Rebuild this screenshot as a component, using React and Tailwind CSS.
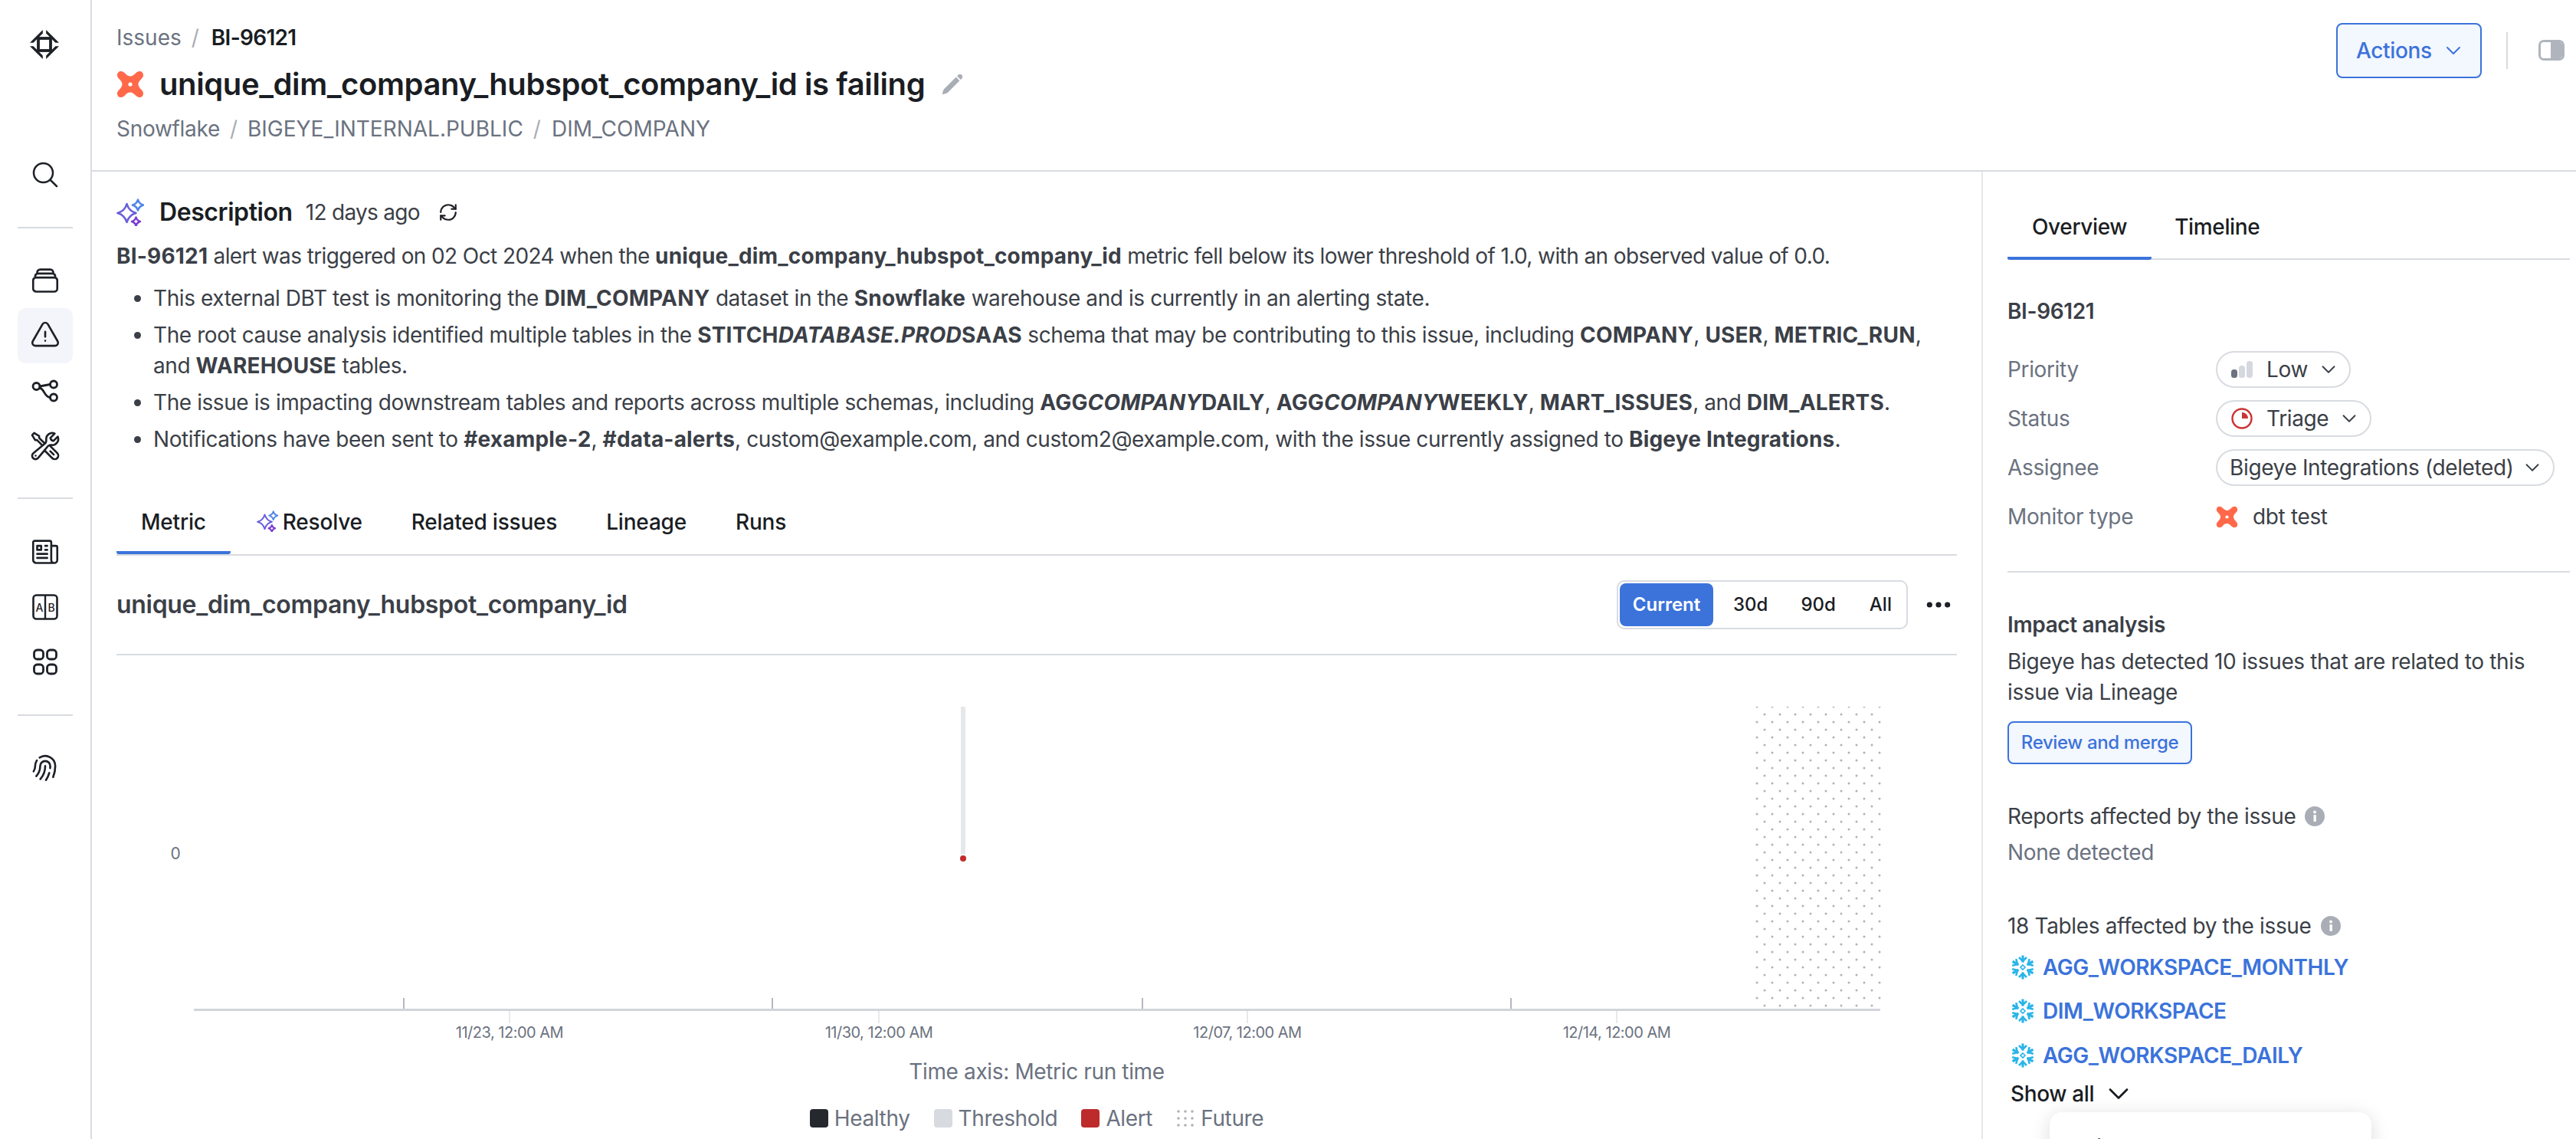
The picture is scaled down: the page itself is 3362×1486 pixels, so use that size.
import React from "react";
import { ChevronDown, Ellipsis, RefreshCw } from "lucide-react";
import {
  HiOutlineMagnifyingGlass,
  HiOutlineRectangleStack,
  HiOutlineExclamationTriangle,
  HiOutlineWrenchScrewdriver,
  HiOutlineNewspaper,
  HiOutlineFingerPrint,
  HiPencil,
} from "react-icons/hi2";

const Logo = () => (
  <svg width="40" height="40" viewBox="0 0 40 40" fill="#1d2026" className="mt-[4px] -ml-[2px]">
    <polygon points="17.8,1 17.8,5.6 5.6,17.8 1,17.8" />
    <polygon points="22.2,1 22.2,5.6 34.4,17.8 39,17.8" />
    <polygon points="17.8,39 17.8,34.4 5.6,22.2 1,22.2" />
    <polygon points="22.2,39 22.2,34.4 34.4,22.2 39,22.2" />
    <rect x="12" y="12" width="16" height="16" fill="none" stroke="#1d2026" strokeWidth="3.8" />
  </svg>
);

const Lineage = () => (
  <svg width="36" height="32" viewBox="0 0 36 32" fill="none" stroke="#1d2026" strokeWidth="2.8" strokeLinecap="round">
    <circle cx="6.5" cy="10" r="4.5" />
    <circle cx="29" cy="7.5" r="4.5" />
    <circle cx="29" cy="24.5" r="4.5" />
    <path d="M11 10 L24.5 7.5" />
    <path d="M10.5 12 C17 13 17 24.5 24.5 24.5" />
  </svg>
);

const AB = () => (
  <svg width="34" height="34" viewBox="0 0 34 34" fill="none">
    <rect x="1.5" y="1.5" width="31" height="31" rx="4" stroke="#1d2026" strokeWidth="2.6" />
    <path d="M17 1.5 V32.5" stroke="#1d2026" strokeWidth="2.4" />
    <text x="9.3" y="22.5" fontSize="14" fontWeight="500" textAnchor="middle" fill="#1d2026" fontFamily="Inter, sans-serif">A</text>
    <text x="25" y="22.5" fontSize="14" fontWeight="500" textAnchor="middle" fill="#1d2026" fontFamily="Inter, sans-serif">B</text>
  </svg>
);

const Grid = () => (
  <svg width="32" height="36" viewBox="0 0 32 36" fill="none" stroke="#1d2026" strokeWidth="2.8">
    <rect x="1.5" y="2" width="12" height="12" rx="4" />
    <rect x="18.5" y="2" width="12" height="12" rx="4" />
    <rect x="1.5" y="21" width="12" height="12" rx="4" />
    <rect x="18.5" y="21" width="12" height="12" rx="4" />
  </svg>
);

const DBT_PATH =
  "M6 1 C8 1 9.5 2 11 3.5 C13.5 6 15.5 7.5 18 7.5 C20.5 7.5 23 5.5 25 3.5 C26.5 2 28 1 30 1 C33 1 35 3 35 6 C35 8 34 9.5 32.5 11 C30 13.5 28.5 15.5 28.5 18 C28.5 20.5 30.5 23 32.5 25 C34 26.5 35 28 35 30 C35 33 33 35 30 35 C28 35 26.5 34 25 32.5 C23 30.5 20.5 28.5 18 28.5 C15.5 28.5 13 30 11 32.5 C9.5 34 8 35 6 35 C3 35 1 33 1 30 C1 28 2 26.5 3.5 25 C5.5 23 7.5 20.5 7.5 18 C7.5 15.5 6 13.5 3.5 11 C2 9.5 1 8 1 6 C1 3 3 1 6 1Z";

const Dbt = ({ size = 36 }) => (
  <svg width={size} height={size} viewBox="0 0 36 36" className="shrink-0">
    <path d={DBT_PATH} fill="#ff694a" />
    <circle cx="18" cy="18" r="2.6" fill="#fff" />
  </svg>
);

const star = (cx, cy, r) => {
  const k = r * 0.22;
  return `M${cx} ${cy - r} Q${cx + k} ${cy - k} ${cx + r} ${cy} Q${cx + k} ${cy + k} ${cx} ${cy + r} Q${cx - k} ${cy + k} ${cx - r} ${cy} Q${cx - k} ${cy - k} ${cx} ${cy - r}Z`;
};

const Sparkle = ({ size = 36 }) => (
  <svg width={size} height={size} viewBox="0 0 36 36" fill="none" strokeWidth="2.6" strokeLinejoin="round" className="shrink-0">
    <path d={star(13.5, 19, 12)} stroke="#6a5fdc" />
    <path d={star(28, 8.5, 7)} stroke="#4f86e8" />
    <path d={star(25.5, 30, 5.5)} stroke="#7a3ed0" />
  </svg>
);

const Snow = () => (
  <svg width="32" height="32" viewBox="-16 -16 32 32" fill="none" stroke="#29b5e8" strokeWidth="3.2" className="shrink-0">
    {[0, 60, 120, 180, 240, 300].map((a) => (
      <g key={a} transform={`rotate(${a})`}>
        <path d="M0 -6.5 V-15.5" />
        <path d="M-5 -13 L0 -8 L5 -13" strokeWidth="2.6" />
      </g>
    ))}
    <path d="M0 -3 L3 0 L0 3 L-3 0Z" strokeWidth="1.6" />
  </svg>
);

const Info = () => (
  <svg width="26" height="26" viewBox="0 0 26 26" className="shrink-0">
    <circle cx="13" cy="13" r="13" fill="#a9adb6" />
    <rect x="11.5" y="11" width="3.4" height="9" rx="1.2" fill="#fff" />
    <circle cx="13" cy="7.5" r="2" fill="#fff" />
  </svg>
);

const Bars = () => (
  <svg width="28" height="22" viewBox="0 0 28 22" className="shrink-0">
    <rect x="0" y="11" width="8" height="11" rx="3.5" fill="#6b7280" />
    <rect x="10" y="6" width="8" height="16" rx="3.5" fill="#d5d8de" />
    <rect x="20" y="0" width="8" height="22" rx="3.5" fill="#d5d8de" />
  </svg>
);

const Triage = () => (
  <svg width="28" height="28" viewBox="0 0 28 28" fill="none" className="shrink-0">
    <circle cx="14" cy="14" r="12.5" stroke="#cc3333" strokeWidth="2.4" />
    <path d="M14 6 A8 8 0 0 1 22 14 H14Z" fill="#cc3333" />
  </svg>
);

const SideCell = ({ active, children }) => (
  <div className={`w-[72px] h-[72px] flex items-center justify-center rounded-[10px] ${active ? "bg-[#f4f5fa]" : ""}`}>
    {children}
  </div>
);

const Divider = ({ className }) => <div className={`w-[72px] h-[2px] bg-[#d8dbe0] ${className}`} />;

const Sidebar = () => (
  <aside className="w-[120px] shrink-0 border-r-2 border-[#d8dbe0] flex flex-col items-center pt-5 text-[#1d2026]">
    <SideCell><Logo /></SideCell>
    <div className="mt-[100px]"><SideCell><HiOutlineMagnifyingGlass size={40} /></SideCell></div>
    <Divider className="mt-8" />
    <div className="mt-8">
      <SideCell><HiOutlineRectangleStack size={42} /></SideCell>
      <SideCell active><HiOutlineExclamationTriangle size={42} /></SideCell>
      <SideCell><Lineage /></SideCell>
      <SideCell><HiOutlineWrenchScrewdriver size={42} /></SideCell>
    </div>
    <Divider className="mt-[31px]" />
    <div className="mt-[33px]">
      <SideCell><HiOutlineNewspaper size={42} /></SideCell>
      <SideCell><AB /></SideCell>
      <SideCell><Grid /></SideCell>
    </div>
    <Divider className="mt-8" />
    <div className="mt-8"><SideCell><HiOutlineFingerPrint size={42} /></SideCell></div>
  </aside>
);

const Slash = ({ className = "mx-[13px]" }) => <span className={`text-[#a9adb6] ${className}`}>/</span>;

const Header = () => (
  <header className="h-[224px] shrink-0 border-b-2 border-[#d8dbe0] flex justify-between pl-8 pr-[15px]">
    <div className="pt-[29px]">
      <div className="h-10 leading-10 text-[28px] text-[#6b7280] tracking-normal">
        Issues<Slash className="ml-[13px] mr-[16px]" /><span className="text-[#1a1d23] font-semibold tracking-[-0.7px]">BI-96121</span>
      </div>
      <div className="mt-[17px] h-12 flex items-center">
        <Dbt />
        <h1 className="ml-5 text-[40px] leading-[48px] font-semibold text-[#1a1d23] tracking-[-0.4px]">unique_dim_company_hubspot_company_id is failing</h1>
        <HiPencil size={30} className="ml-[21px] text-[#a9adb6]" />
      </div>
      <div className="mt-[14px] h-10 leading-10 text-[28px] text-[#6b7280] tracking-normal">
        <span className="tracking-[-0.3px]">Snowflake</span><Slash />BIGEYE_INTERNAL.PUBLIC<Slash className="ml-[13px] mr-[14px]" />DIM_COMPANY
      </div>
    </div>
    <div className="pt-[30px] flex items-start">
      <button className="w-[190px] h-[72px] border-2 border-[#3b73db] bg-[#f3f7fe] rounded-lg text-[#3b73db] text-[28px] font-medium flex items-center pl-[24px] gap-3">
        Actions <ChevronDown size={32} strokeWidth={1.5} />
      </button>
      <div className="w-[2px] h-12 bg-[#d8dbe0] ml-8 mt-3" />
      <div className="ml-10 mt-[22px] w-[34px] h-[27px] rounded-[7px] border-[3px] border-[#b0b5bd] bg-white overflow-hidden flex justify-end">
        <div className="w-[15px] h-full bg-[#b0b5bd]" />
      </div>
    </div>
  </header>
);

const B = ({ children }) => <strong className="font-bold tracking-[0.2px]">{children}</strong>;

const Description = () => (
  <section className="text-[28px] leading-10 text-[#3b3f47] tracking-[-0.42px]">
    <div className="flex items-center h-10">
      <Sparkle />
      <h2 className="ml-5 text-[32px] font-semibold text-[#1a1d23]">Description</h2>
      <span className="ml-[17px] text-[#3b3f47] tracking-[-0.7px]">12 days ago</span>
      <RefreshCw size={26} strokeWidth={2} className="ml-6 text-[#1d2026]" />
    </div>
    <p className="mt-[17px] tracking-[-0.6px]">
      <B>BI-96121</B> alert was triggered on 02 Oct 2024 when the <B>unique_dim_company_hubspot_company_id</B> metric fell below its lower threshold of 1.0, with an observed value of 0.0.
    </p>
    <ul className="mt-[15px] list-disc pl-12 flex flex-col gap-2">
      <li>This external DBT test is monitoring the <B>DIM_COMPANY</B> dataset in the <B>Snowflake</B> warehouse and is currently in an alerting state.</li>
      <li>The root cause analysis identified multiple tables in the <B>STITCH<em>DATABASE.PROD</em>SAAS</B> schema that may be contributing to this issue, including <B>COMPANY</B>, <B>USER</B>, <B>METRIC_RUN</B>, and <B>WAREHOUSE</B> tables.</li>
      <li>The issue is impacting downstream tables and reports across multiple schemas, including <B>AGG<em>COMPANY</em>DAILY</B>, <B>AGG<em>COMPANY</em>WEEKLY</B>, <B>MART_ISSUES</B>, and <B>DIM_ALERTS</B>.</li>
      <li>Notifications have been sent to <B>#example-2</B>, <B>#data-alerts</B>, custom@example.com, and custom2@example.com, with the issue currently assigned to <B>Bigeye Integrations</B>.</li>
    </ul>
  </section>
);

const MetricTabs = () => (
  <div className="mt-[50px] h-[82px] border-b-2 border-[#d8dbe0] flex text-[28px] font-medium text-[#1a1d23] tracking-[-0.2px]">
    <div className="px-8 h-[80px] border-b-4 border-[#3b73db] rounded-b-[3px] pt-[17px]">Metric</div>
    <div className="pl-8 pr-8 ml-[2px] pt-[17px] flex items-start gap-[6px]">
      <span className="mt-[6px]"><Sparkle size={28} /></span>Resolve
    </div>
    <div className="px-8 pt-[17px]">Related issues</div>
    <div className="px-8 pt-[17px]">Lineage</div>
    <div className="px-8 pt-[17px]">Runs</div>
  </div>
);

const MetricBar = () => (
  <div className="h-[130px] border-b-2 border-[#d8dbe0] flex items-center justify-between pr-[4px]">
    <h3 className="text-[32px] font-semibold text-[#3b3f47] tracking-[-0.3px]">unique_dim_company_hubspot_company_id</h3>
    <div className="flex items-center">
      <div className="w-[380px] h-[64px] border-2 border-[#d8dbe0] rounded-[10px] p-[2px] flex items-center text-[24px] font-medium text-[#1a1d23] tracking-normal">
        <div className="w-[122px] h-[56px] rounded-lg bg-[#3b73db] text-white flex items-center justify-center font-semibold">Current</div>
        <span className="ml-[26px]">30d</span>
        <span className="ml-[43px]">90d</span>
        <span className="ml-[44px]">All</span>
      </div>
      <Ellipsis size={40} strokeWidth={2.3} className="ml-[20px] text-[#1a1d23]" />
    </div>
  </div>
);

const up = [527, 1008, 1491, 1972];
const down = [
  [665, "11/23, 12:00 AM"],
  [1147, "11/30, 12:00 AM"],
  [1628, "12/07, 12:00 AM"],
  [2110, "12/14, 12:00 AM"],
];

const Chart = () => (
  <svg width="2402" height="510" viewBox="152 856 2402 510" className="block">
    <defs>
      <pattern id="futureDots" x="2293" y="923" width="20" height="20" patternUnits="userSpaceOnUse">
        <circle cx="0" cy="0" r="1.5" fill="#aeb2ba" />
        <circle cx="20" cy="0" r="1.5" fill="#aeb2ba" />
        <circle cx="0" cy="20" r="1.5" fill="#aeb2ba" />
        <circle cx="20" cy="20" r="1.5" fill="#aeb2ba" />
        <circle cx="10" cy="10" r="1.5" fill="#aeb2ba" />
      </pattern>
    </defs>
    <rect x="2288" y="923" width="167" height="395" fill="url(#futureDots)" />
    <rect x="1254" y="923" width="6" height="192" fill="#e5e7eb" />
    <circle cx="1257" cy="1121" r="4" fill="#c02b2b" />
    <text x="229" y="1122" textAnchor="middle" fontSize="21" fill="#6b7280" fontFamily="Inter, sans-serif">0</text>
    <rect x="253" y="1317" width="2201" height="3" fill="#d1d4da" />
    {up.map((x) => (
      <rect key={x} x={x - 1} y="1303" width="2" height="14" fill="#b4b8c0" />
    ))}
    {down.map(([x, label]) => (
      <g key={x}>
        <rect x={x - 0.5} y="1320" width="1" height="16" fill="#d1d4da" />
        <text x={x} y="1355" textAnchor="middle" fontSize="20" letterSpacing="-0.5" fill="#6b7280" fontFamily="Inter, sans-serif">{label}</text>
      </g>
    ))}
  </svg>
);

const FutureSwatch = () => (
  <svg width="24" height="24" viewBox="0 0 24 24" fill="#aeb2ba">
    {[3, 12, 21].map((y) => [3, 12, 21].map((x) => <circle key={`${x}-${y}`} cx={x} cy={y} r="1.8" />))}
  </svg>
);

const Legend = () => (
  <div className="mt-[13px] text-[28px] leading-10 text-[#6b7280] flex flex-col items-center">
    <div>Time axis: Metric run time</div>
    <div className="mt-[21px] flex items-center">
      <span className="w-6 h-6 rounded bg-[#25282d]" /><span className="ml-2">Healthy</span>
      <span className="ml-[31px] w-6 h-6 rounded bg-[#d7dadf]" /><span className="ml-2">Threshold</span>
      <span className="ml-[31px] w-6 h-6 rounded bg-[#bd2b2b]" /><span className="ml-2">Alert</span>
      <span className="ml-[31px]"><FutureSwatch /></span><span className="ml-2">Future</span>
    </div>
  </div>
);

const Select = ({ icon, label, w }) => (
  <div className={`h-[48px] border-2 border-[#d8dbe0] rounded-full flex items-center justify-between pl-[16px] pr-[12px] ${w}`}>
    <span className="flex items-center gap-[18px]">{icon}<span>{label}</span></span>
    <ChevronDown size={30} strokeWidth={1.5} />
  </div>
);

const Row = ({ label, children }) => (
  <div className="h-[48px] flex items-center mb-4">
    <span className="w-[272px] text-[#6b7280]">{label}</span>
    {children}
  </div>
);

const TableLink = ({ name }) => (
  <div className="h-[57.5px] flex items-center gap-[10px] pl-1 text-[#3b73db] font-semibold tracking-[-0.45px]">
    <Snow />{name}
  </div>
);

const RightPanel = () => (
  <aside className="w-[776px] shrink-0 border-l-2 border-[#e5e7eb] pl-8 pr-2 text-[28px] leading-10 text-[#3b3f47] relative">
    <div className="mt-[50px] h-[65px] border-b-2 border-[#d8dbe0] flex font-medium text-[#1a1d23]">
      <div className="px-8 h-[65px] pt-[2px] border-b-4 border-[#3b73db] rounded-b-[3px]">Overview</div>
      <div className="pl-[30px] pt-[2px]">Timeline</div>
    </div>
    <div className="mt-[47px] font-semibold">BI-96121</div>
    <div className="mt-[32px]">
      <Row label="Priority"><Select icon={<Bars />} label="Low" w="w-[176px] !pl-[18px]" /></Row>
      <Row label="Status"><Select icon={<Triage />} label="Triage" w="w-[203px] !pl-[18px]" /></Row>
      <Row label="Assignee"><Select label="Bigeye Integrations (deleted)" w="w-[442px]" /></Row>
      <Row label="Monitor type">
        <span className="flex items-center gap-[19px]"><Dbt size={29} />dbt test</span>
      </Row>
    </div>
    <div className="mt-[47px] pt-[48px] border-t-2 border-[#d8dbe0]">
      <div className="font-semibold">Impact analysis</div>
      <p className="mt-[8px] w-[700px]">Bigeye has detected 10 issues that are related to this issue via Lineage</p>
    </div>
    <button className="mt-[18px] w-[241px] h-[56px] border-2 border-[#3b73db] bg-[#f3f7fe] rounded-lg text-[24px] font-medium text-[#3b73db]">Review and merge</button>
    <div className="mt-[48px] flex items-center gap-3">Reports affected by the issue <Info /></div>
    <div className="mt-[7px] text-[#6b7280]">None detected</div>
    <div className="mt-[56px] flex items-center gap-3">18 Tables affected by the issue <Info /></div>
    <div className="mt-[5px]">
      <TableLink name="AGG_WORKSPACE_MONTHLY" />
      <TableLink name="DIM_WORKSPACE" />
      <TableLink name="AGG_WORKSPACE_DAILY" />
    </div>
    <div className="mt-[1px] pl-1 flex items-center gap-[10px] font-medium text-[#1a1d23]">
      Show all <ChevronDown size={44} strokeWidth={1.5} className="-my-1" />
    </div>
    <div className="absolute left-[87px] top-[1227px] w-[420px] h-[60px] bg-white rounded-t-2xl shadow-[0_4px_24px_rgba(0,0,0,0.14)] px-7 pt-[26px] text-[#3b3f47] font-medium whitespace-nowrap">
      unique_dbt test ID
    </div>
  </aside>
);

export default function App() {
  return (
    <div className="w-[3362px] h-[1486px] overflow-hidden flex bg-white font-[Inter,sans-serif] tracking-[-0.36px]">
      <Sidebar />
      <div className="flex-1 flex flex-col min-w-0">
        <Header />
        <div className="flex-1 flex min-h-0">
          <main className="flex-1 min-w-0 pl-8 pr-[32px] pt-[33px]">
            <Description />
            <MetricTabs />
            <MetricBar />
            <Chart />
            <Legend />
          </main>
          <RightPanel />
        </div>
      </div>
    </div>
  );
}
